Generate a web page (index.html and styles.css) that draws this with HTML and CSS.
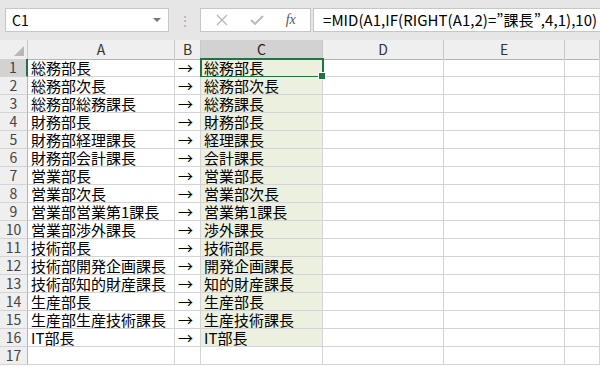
FILE: index.html
```html
<!DOCTYPE html>
<html lang="ja">
<head>
  <meta charset="utf-8">
  <title>Excel MID</title>
  <link rel="stylesheet" href="styles.css">
</head>
<body>
  <!-- barre de formule -->
  <div class="toolbar">
    <div class="namebox">
      <span>C1</span>
      <span class="drop"></span>
    </div>
    <div class="grip">⋮</div>
    <div class="fxbox">
      <svg width="14" height="14" viewBox="0 0 14 14"><path d="M2 2 L12 12 M12 2 L2 12" stroke="#b8b8b8" stroke-width="1.4" fill="none"/></svg>
      <svg width="16" height="14" viewBox="0 0 16 14"><path d="M2 7 L6 11 L14 3" stroke="#b8b8b8" stroke-width="1.8" fill="none"/></svg>
      <span class="fx">fx</span>
    </div>
    <div class="formula">=MID(A1,IF(RIGHT(A1,2)=”課長”,4,1),10)</div>
  </div>

  <!-- feuille -->
  <div class="sheet">
    <div class="row head">
      <div class="cell corner"><span class="tri"></span></div>
      <div class="cell">A</div>
      <div class="cell">B</div>
      <div class="cell sel-col">C</div>
      <div class="cell">D</div>
      <div class="cell">E</div>
      <div class="cell"></div>
    </div>
    <div class="row">
      <div class="cell num sel-row">1</div><div class="cell">総務部長</div><div class="cell arrow">→</div><div class="cell fill active">総務部長</div><div class="cell"></div><div class="cell"></div><div class="cell"></div>
    </div>
    <div class="row">
      <div class="cell num">2</div><div class="cell">総務部次長</div><div class="cell arrow">→</div><div class="cell fill">総務部次長</div><div class="cell"></div><div class="cell"></div><div class="cell"></div>
    </div>
    <div class="row">
      <div class="cell num">3</div><div class="cell">総務部総務課長</div><div class="cell arrow">→</div><div class="cell fill">総務課長</div><div class="cell"></div><div class="cell"></div><div class="cell"></div>
    </div>
    <div class="row">
      <div class="cell num">4</div><div class="cell">財務部長</div><div class="cell arrow">→</div><div class="cell fill">財務部長</div><div class="cell"></div><div class="cell"></div><div class="cell"></div>
    </div>
    <div class="row">
      <div class="cell num">5</div><div class="cell">財務部経理課長</div><div class="cell arrow">→</div><div class="cell fill">経理課長</div><div class="cell"></div><div class="cell"></div><div class="cell"></div>
    </div>
    <div class="row">
      <div class="cell num">6</div><div class="cell">財務部会計課長</div><div class="cell arrow">→</div><div class="cell fill">会計課長</div><div class="cell"></div><div class="cell"></div><div class="cell"></div>
    </div>
    <div class="row">
      <div class="cell num">7</div><div class="cell">営業部長</div><div class="cell arrow">→</div><div class="cell fill">営業部長</div><div class="cell"></div><div class="cell"></div><div class="cell"></div>
    </div>
    <div class="row">
      <div class="cell num">8</div><div class="cell">営業部次長</div><div class="cell arrow">→</div><div class="cell fill">営業部次長</div><div class="cell"></div><div class="cell"></div><div class="cell"></div>
    </div>
    <div class="row">
      <div class="cell num">9</div><div class="cell">営業部営業第1課長</div><div class="cell arrow">→</div><div class="cell fill">営業第1課長</div><div class="cell"></div><div class="cell"></div><div class="cell"></div>
    </div>
    <div class="row">
      <div class="cell num">10</div><div class="cell">営業部渉外課長</div><div class="cell arrow">→</div><div class="cell fill">渉外課長</div><div class="cell"></div><div class="cell"></div><div class="cell"></div>
    </div>
    <div class="row">
      <div class="cell num">11</div><div class="cell">技術部長</div><div class="cell arrow">→</div><div class="cell fill">技術部長</div><div class="cell"></div><div class="cell"></div><div class="cell"></div>
    </div>
    <div class="row">
      <div class="cell num">12</div><div class="cell">技術部開発企画課長</div><div class="cell arrow">→</div><div class="cell fill">開発企画課長</div><div class="cell"></div><div class="cell"></div><div class="cell"></div>
    </div>
    <div class="row">
      <div class="cell num">13</div><div class="cell">技術部知的財産課長</div><div class="cell arrow">→</div><div class="cell fill">知的財産課長</div><div class="cell"></div><div class="cell"></div><div class="cell"></div>
    </div>
    <div class="row">
      <div class="cell num">14</div><div class="cell">生産部長</div><div class="cell arrow">→</div><div class="cell fill">生産部長</div><div class="cell"></div><div class="cell"></div><div class="cell"></div>
    </div>
    <div class="row">
      <div class="cell num">15</div><div class="cell">生産部生産技術課長</div><div class="cell arrow">→</div><div class="cell fill">生産技術課長</div><div class="cell"></div><div class="cell"></div><div class="cell"></div>
    </div>
    <div class="row">
      <div class="cell num">16</div><div class="cell">IT部長</div><div class="cell arrow">→</div><div class="cell fill">IT部長</div><div class="cell"></div><div class="cell"></div><div class="cell"></div>
    </div>
    <div class="row">
      <div class="cell num">17</div><div class="cell"></div><div class="cell"></div><div class="cell"></div><div class="cell"></div><div class="cell"></div><div class="cell"></div>
    </div>
  </div>
</body>
</html>
```

FILE: styles.css
```css
body {
  margin: 0;
  width: 600px;
  height: 367px;
  overflow: hidden;
  background: #ffffff;
  font-family: "Noto Sans CJK JP", "Liberation Sans", sans-serif;
  color: #000;
}

/* Barre du haut */
.toolbar {
  height: 40px;
  background: #e6e6e6;
  display: flex;
  align-items: flex-start;
  padding-top: 8px;
  box-sizing: border-box;
}
.namebox {
  flex: none;
  margin-left: 5px;
  width: 164px;
  height: 24px;
  box-sizing: border-box;
  background: #fff;
  border: 1px solid #c6c6c6;
  display: flex;
  align-items: center;
  justify-content: space-between;
  padding: 0 7px 0 6px;
  font-size: 14px;
  line-height: 18px;
}
.drop {
  width: 0;
  height: 0;
  border-left: 4px solid transparent;
  border-right: 4px solid transparent;
  border-top: 4px solid #777;
}
.grip {
  flex: none;
  width: 31px;
  text-align: center;
  color: #b0b0b0;
  font-size: 14px;
  line-height: 24px;
}
.fxbox {
  flex: none;
  width: 111px;
  height: 24px;
  box-sizing: border-box;
  background: #fff;
  border: 1px solid #c6c6c6;
  display: flex;
  align-items: center;
  justify-content: space-around;
  padding: 0 4px;
}
.fx {
  font-family: "Liberation Serif", serif;
  font-style: italic;
  font-size: 14px;
  line-height: 18px;
  color: #555;
}
.formula {
  margin-left: 2px;
  flex: 1;
  min-width: 0;
  overflow: hidden;
  height: 24px;
  box-sizing: border-box;
  background: #fff;
  border: 1px solid #c6c6c6;
  border-right: none;
  padding-left: 9px;
  font-size: 15px;
  letter-spacing: 0.05px;
  line-height: 22px;
  white-space: nowrap;
}

/* Grille */
.sheet {
  font-size: 15px;
}
.row {
  display: grid;
  grid-template-columns: 28px 147px 26px 122px 121px 121px 35px;
  height: 18px;
}
.row.head {
  height: 19px;
}
.cell {
  box-sizing: border-box;
  border-right: 1px solid #d4d4d4;
  border-bottom: 1px solid #d4d4d4;
  padding-left: 3px;
  line-height: 17px;
  white-space: nowrap;
  position: relative;
}
.head .cell {
  background: #efefef;
  border-right-color: #c8c8c8;
  border-bottom-color: #b4b4b4;
  text-align: center;
  padding-left: 0;
  color: #333;
  font-size: 14px;
  line-height: 18px;
}
.head .sel-col {
  background: #d2d2d2;
  border-bottom: 2px solid #217346;
  color: #222;
}
.corner .tri {
  position: absolute;
  right: 3px;
  bottom: 3px;
  width: 0;
  height: 0;
  border-left: 10px solid transparent;
  border-bottom: 10px solid #b8b8b8;
}
.num {
  background: #efefef;
  text-align: center;
  padding-left: 0;
  color: #444;
  font-size: 14px;
  border-right-color: #b4b4b4;
  border-bottom-color: #d4d4d4;
}
.num.sel-row {
  background: #d2d2d2;
  border-right: 2px solid #217346;
}
.arrow {
  padding-left: 3px;
}
.fill {
  background: #ebf1de;
}
.active::after {
  content: "";
  position: absolute;
  left: -1px;
  top: -1px;
  right: -2px;
  bottom: -2px;
  border: 2px solid #217346;
}
.active::before {
  content: "";
  position: absolute;
  right: -4px;
  bottom: -4px;
  width: 6px;
  height: 6px;
  background: #217346;
  border: 1px solid #fff;
  z-index: 1;
}
```
